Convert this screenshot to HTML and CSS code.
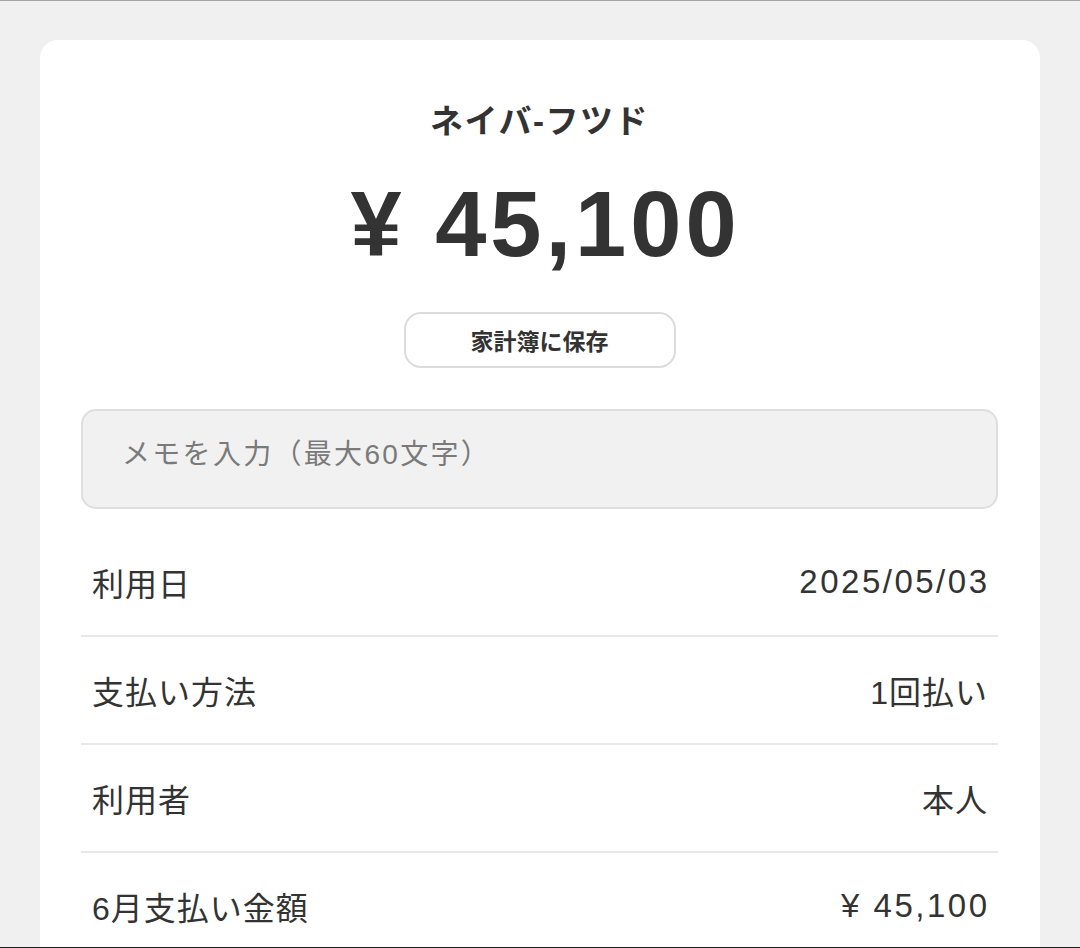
FILE: index.html
```html
<!DOCTYPE html>
<html lang="ja">
<head>
    <meta charset="utf-8">
    <meta name="viewport" content="width=device-width, initial-scale=1">
    <title>ご利用明細</title>
    <link rel="stylesheet" href="styles.css">
</head>
<body>
    <div class="screen">
        <div class="card">
            <h1 class="shop">ネイバ-フツド</h1>
            <p class="amount">¥ 45,100</p>

            <div class="save">
                <button class="save-btn">家計簿に保存</button>
            </div>

            <input class="memo" type="text" placeholder="メモを入力（最大60文字）">

            <div class="rows">
                <div class="row">
                    <span class="label">利用日</span>
                    <span class="value num">2025/05/03</span>
                </div>
                <div class="row">
                    <span class="label">支払い方法</span>
                    <span class="value">1回払い</span>
                </div>
                <div class="row">
                    <span class="label">利用者</span>
                    <span class="value">本人</span>
                </div>
                <div class="row">
                    <span class="label">6月支払い金額</span>
                    <span class="value num">¥ 45,100</span>
                </div>
            </div>
        </div>
    </div>
</body>
</html>
```

FILE: styles.css
```css
body {
    margin: 0;
    padding: 0;
    background-color: #f0f0f0;
    font-family: "Liberation Sans", "Noto Sans CJK JP", sans-serif;
    color: #333;
}
.screen {
    height: 948px;
    box-sizing: border-box;
    border-top: 1px solid #a4a4a4;
    border-bottom: 1px solid #1e1e1e;
    padding-top: 39px;
    overflow: hidden;
}
.card {
    width: 1000px;
    margin: 0 auto 0 40px;
    box-sizing: border-box;
    padding: 62px 42px 0 41px;
    background: white;
    border-radius: 18px;
    min-height: 1000px;
}
.shop {
    margin: 0;
    text-align: center;
    font-size: 33px;
    line-height: 40px;
    font-weight: bold;
    letter-spacing: 1.5px;
}
.amount {
    margin: 32px 0 0;
    padding-left: 12px;
    text-align: center;
    font-size: 92px;
    line-height: 100px;
    font-weight: bold;
    letter-spacing: 4px;
}
.save {
    margin-top: 38px;
    display: flex;
    justify-content: center;
}
.save-btn {
    width: 272px;
    height: 56px;
    background: white;
    border: 2px solid #dcdcdc;
    border-radius: 17px;
    font-family: inherit;
    font-size: 23px;
    font-weight: bold;
    color: #333;
    cursor: pointer;
}
.memo {
    display: block;
    width: 100%;
    height: 100px;
    margin-top: 41px;
    box-sizing: border-box;
    padding: 0 39px 9px;
    background: #f1f1f1;
    border: 2px solid #dedede;
    border-radius: 15px;
    font-family: inherit;
    font-size: 28px;
    letter-spacing: 2.3px;
    color: #333;
    outline: none;
}
.memo::placeholder {
    color: #7a7a7a;
}
.rows {
    margin-top: 20px;
}
.row {
    display: flex;
    justify-content: space-between;
    align-items: center;
    height: 106px;
    padding: 0 11px;
    border-bottom: 2px solid #e8e8e8;
    font-size: 32px;
    letter-spacing: 1px;
}
.value {
    margin-right: -1px;
}
.value.num {
    font-size: 33px;
    letter-spacing: 2.5px;
    margin-right: -2.5px;
}
```
